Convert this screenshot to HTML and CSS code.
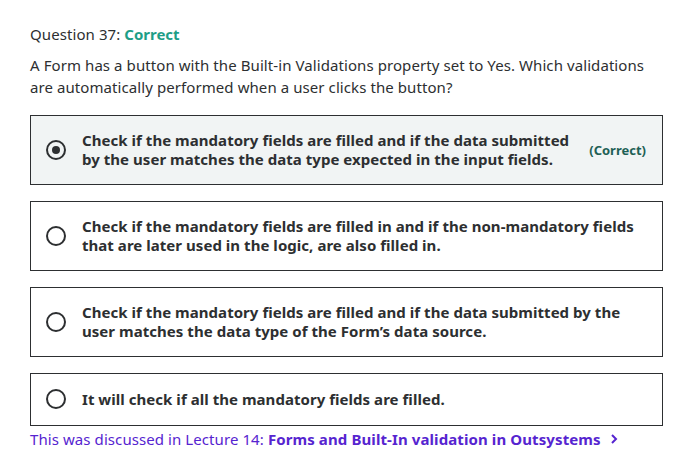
FILE: index.html
```html
<!DOCTYPE html>
<html>
<head>
<meta charset="utf-8">
<link rel="stylesheet" href="styles.css">
</head>
<body>
<div class="page">
  <div class="title">Question 37: <span class="ok">Correct</span></div>
  <p class="prompt">A Form has a button with the Built-in Validations property set to Yes. Which validations are automatically performed when a user clicks the button?</p>
  <div class="answers">
    <div class="answer selected">
      <span class="radio checked"></span>
      <span class="text">Check if the mandatory fields are filled and if the data submitted by the user matches the data type expected in the input fields.</span>
      <span class="tag">(Correct)</span>
    </div>
    <div class="answer">
      <span class="radio"></span>
      <span class="text">Check if the mandatory fields are filled in and if the non-mandatory fields that are later used in the logic, are also filled in.</span>
    </div>
    <div class="answer">
      <span class="radio"></span>
      <span class="text">Check if the mandatory fields are filled and if the data submitted by the user matches the data type of the Form’s data source.</span>
    </div>
    <div class="answer short">
      <span class="radio"></span>
      <span class="text">It will check if all the mandatory fields are filled.</span>
    </div>
  </div>
  <div class="ref">This was discussed in Lecture 14: <b>Forms and Built-In validation in Outsystems</b><svg class="chev" width="10" height="12" viewBox="0 0 10 12"><path d="M3 2l4 4-4 4" fill="none" stroke="currentColor" stroke-width="2"/></svg></div>
</div>
</body>
</html>
```
FILE: styles.css
```css
html, body { margin: 0; padding: 0; background: #fff; }
body { font-family: "Noto Sans", sans-serif; color: #2d2f31; }
.page { padding: 23px 30px 0 30px; width: 633px; }
.title { font-size: 15px; line-height: 22px; letter-spacing: 0.08px; }
.ok { color: #1e9e87; font-weight: 700; letter-spacing: 0; }
.prompt { font-size: 15px; line-height: 22px; margin: 9px 0 0 0; letter-spacing: 0.08px; }
.answers { margin-top: 17px; display: flex; flex-direction: column; gap: 16px; }
.answer { display: flex; align-items: center; border: 1px solid #2d2f31; padding: 15px 16px 15px 15px; }
.answer.short { padding: 15px 16px 16px 15px; }
.answer.selected { background: #f1f4f4; }
.radio { flex: none; width: 16px; height: 16px; border: 2px solid #2d2f31; border-radius: 50%; margin-right: 16px; position: relative; }
.radio.checked::after { content: ""; position: absolute; left: 4px; top: 4px; width: 8px; height: 8px; border-radius: 50%; background: #2d2f31; }
.text { font-size: 15px; font-weight: 700; line-height: 19px; flex: 1; letter-spacing: 0.04px; }
.tag { font-size: 13px; font-weight: 700; color: #1e6055; margin-left: 16px; }
.ref { font-size: 15px; line-height: 22px; color: #5624d0; margin-top: 2px; display: flex; align-items: center; letter-spacing: 0.08px; }
.ref b { margin-left: 4px; letter-spacing: 0.1px; }
.chev { margin-left: 8px; }
```
